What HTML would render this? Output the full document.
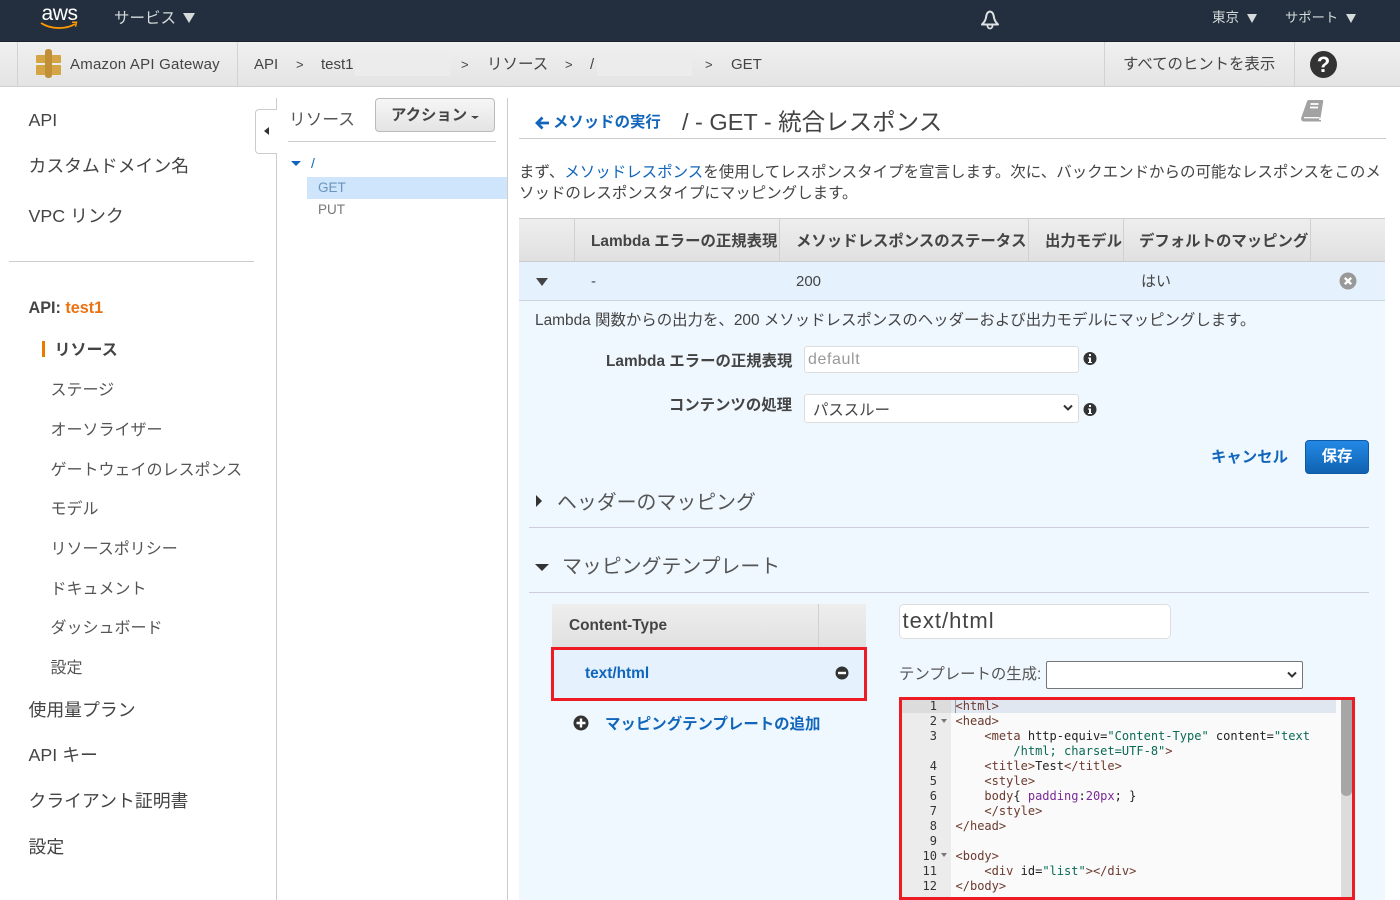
<!DOCTYPE html>
<html lang="ja"><head><meta charset="utf-8"><title>Amazon API Gateway</title>
<style>
html,body{margin:0;padding:0;background:#fff;}
body{width:1400px;height:900px;overflow:hidden;position:relative;font-family:"Liberation Sans","Noto Sans CJK JP",sans-serif;color:#444;font-size:14px;}
.t{position:absolute;white-space:nowrap;line-height:20px;}
.b{position:absolute;}
.nav{font-size:17.850px;color:#444;}
.sub{font-size:16px;color:#555;}
.th{font-size:15.400px;font-weight:bold;color:#444;top:232px;}
.hd{background:linear-gradient(#eee,#e0e0e0);}
.cd{position:absolute;left:955.500px;font-family:"DejaVu Sans Mono","Liberation Mono",monospace;font-size:12.030px;line-height:15px;white-space:pre;color:#222;}
.tg{color:#6b3a2e}.av{color:#0a6a55}
.ln{position:absolute;width:36px;left:901px;text-align:right;font-family:"DejaVu Sans Mono",monospace;font-size:12px;line-height:15px;color:#333;}
.fold{position:absolute;left:941px;width:0;height:0;border-left:3px solid transparent;border-right:3px solid transparent;border-top:4px solid #777;}
</style></head><body>

<!-- top bar -->
<div class="b" style="left:0;top:0;width:1400px;height:41px;background:#232f3e;border-bottom:1px solid #1a2430;"></div>
<div class="t" style="left:41.500px;top:2px;font-size:21px;color:#fff;line-height:24px;letter-spacing:-.4px;">aws</div>
<svg class="b" style="left:40px;top:21px" width="38" height="10" viewBox="0 0 38 10"><path d="M1 2C10 8 25 9 35 3" fill="none" stroke="#f90" stroke-width="1.800"/><path d="M32 1.200l4.500 0-1 4.500" fill="none" stroke="#f90" stroke-width="1.500"/></svg>
<div class="t" style="left:114px;top:9px;font-size:15.500px;color:#d5dbdb;">サービス</div>
<div class="b" style="left:183px;top:13px;border-left:6px solid transparent;border-right:6px solid transparent;border-top:10px solid #d5dbdb;"></div>
<svg class="b" style="left:979px;top:9px" width="22" height="22" viewBox="0 0 22 22"><path d="M11 2.500C8 3 7.500 5.500 7 8.500C6.600 11 5 13.500 3 15.500H19C17 13.500 15.400 11 15 8.500C14.500 5.500 14 3 11 2.500Z" fill="none" stroke="#dfe2e2" stroke-width="2" stroke-linejoin="round"/><path d="M8.500 16.500a2.500 3 0 0 0 5 0" fill="none" stroke="#dfe2e2" stroke-width="1.800"/></svg>
<div class="t" style="left:1212px;top:8px;font-size:13.500px;color:#d5dbdb;">東京</div>
<div class="b" style="left:1247px;top:14px;border-left:5px solid transparent;border-right:5px solid transparent;border-top:9px solid #d5dbdb;"></div>
<div class="t" style="left:1285px;top:8px;font-size:13.300px;color:#d5dbdb;">サポート</div>
<div class="b" style="left:1346px;top:14px;border-left:5px solid transparent;border-right:5px solid transparent;border-top:9px solid #d5dbdb;"></div>

<!-- service bar -->
<div class="b" style="left:0;top:42px;width:1400px;height:44px;background:linear-gradient(#f0f0f0,#e4e4e4);border-bottom:1px solid #d0d0d0;"></div>
<div class="b" style="left:17px;top:42px;width:1px;height:44px;background:#d2d2d2;"></div>
<div class="b" style="left:237px;top:42px;width:1px;height:44px;background:#d2d2d2;"></div>
<div class="b" style="left:1104px;top:42px;width:1px;height:44px;background:#d2d2d2;"></div>
<div class="b" style="left:1294px;top:42px;width:1px;height:44px;background:#d2d2d2;"></div>
<svg class="b" style="left:36px;top:49px" width="26" height="29" viewBox="0 0 26 29"><path d="M0 7q0-1 1-1h9v8H1q-1 0-1-1zM15 6h9q1 0 1 1v6q0 1-1 1h-9zM0 17q0-1 1-1h9v10H1q-1 0-1-1zM15 16h9q1 0 1 1v8q0 1-1 1h-9z" fill="#d4a545"/><path d="M9 3q0-3 3.500-3T16 3v23q0 3-3.500 3T9 26z" fill="#c08f37"/></svg>
<div class="t" style="left:70px;top:55px;font-size:15px;letter-spacing:.22px;color:#444;">Amazon API Gateway</div>
<div class="t" style="left:254px;top:55px;font-size:15px;">API</div>
<div class="t" style="left:296px;top:55px;font-size:13px;">&gt;</div>
<div class="t" style="left:321px;top:55px;font-size:15px;">test1</div>
<div class="b" style="left:355px;top:52px;width:95px;height:24px;background:#ececec;"></div>
<div class="t" style="left:461px;top:55px;font-size:13px;">&gt;</div>
<div class="t" style="left:487px;top:55px;font-size:15.500px;">リソース</div>
<div class="t" style="left:565px;top:55px;font-size:13px;">&gt;</div>
<div class="t" style="left:590px;top:55px;font-size:15px;">/</div>
<div class="b" style="left:597px;top:52px;width:95px;height:24px;background:#ececec;"></div>
<div class="t" style="left:705px;top:55px;font-size:13px;">&gt;</div>
<div class="t" style="left:731px;top:55px;font-size:15px;">GET</div>
<div class="t" style="left:1123px;top:55px;font-size:15.400px;">すべてのヒントを表示</div>
<div class="b" style="left:1310px;top:51px;width:27px;height:27px;border-radius:50%;background:#333;color:#fff;font:bold 22px/27px 'Liberation Sans',sans-serif;text-align:center;">?</div>

<!-- left nav -->
<div class="t nav" style="left:28.500px;top:110px;">API</div>
<div class="t nav" style="left:28.500px;top:156px;">カスタムドメイン名</div>
<div class="t nav" style="left:28.500px;top:206px;">VPC リンク</div>
<div class="b" style="left:9px;top:261px;width:245px;height:1px;background:#ccc;"></div>
<div class="t" style="left:28.500px;top:298px;font-size:16.200px;font-weight:bold;color:#444;">API: <span style="color:#ec7211">test1</span></div>
<div class="b" style="left:42px;top:341px;width:3px;height:16px;background:#e87b00;"></div>
<div class="t" style="left:54.500px;top:341px;font-size:16px;font-weight:bold;color:#444;">リソース</div>
<div class="t sub" style="left:50.500px;top:381px;">ステージ</div>
<div class="t sub" style="left:50.500px;top:421px;">オーソライザー</div>
<div class="t sub" style="left:50.500px;top:461px;">ゲートウェイのレスポンス</div>
<div class="t sub" style="left:50.500px;top:500px;">モデル</div>
<div class="t sub" style="left:50.500px;top:540px;">リソースポリシー</div>
<div class="t sub" style="left:50.500px;top:580px;">ドキュメント</div>
<div class="t sub" style="left:50.500px;top:619px;">ダッシュボード</div>
<div class="t sub" style="left:50.500px;top:659px;">設定</div>
<div class="t nav" style="left:28.500px;top:700px;">使用量プラン</div>
<div class="t nav" style="left:28.500px;top:745px;">API キー</div>
<div class="t nav" style="left:28.500px;top:791px;">クライアント証明書</div>
<div class="t nav" style="left:28.500px;top:837px;">設定</div>
<div class="b" style="left:276px;top:98px;width:1px;height:802px;background:#ccc;"></div>
<div class="b" style="left:255px;top:109px;width:21px;height:43px;background:#fff;border:1px solid #ccc;border-right:none;border-radius:4px 0 0 4px;"></div>
<div class="b" style="left:264px;top:127px;border-top:4px solid transparent;border-bottom:4px solid transparent;border-right:5px solid #333;"></div>

<!-- resource column -->
<div class="t" style="left:289px;top:110px;font-size:16.700px;color:#555;">リソース</div>
<div class="b" style="left:375px;top:98px;width:120px;height:34px;box-sizing:border-box;background:linear-gradient(#f6f6f6,#e4e4e4);border:1px solid #bbb;border-radius:4px;"></div>
<div class="t" style="left:391px;top:106px;font-size:15.400px;font-weight:bold;color:#444;">アクション</div>
<div class="b" style="left:471px;top:116px;border-left:4px solid transparent;border-right:4px solid transparent;border-top:3px solid #444;"></div>
<div class="b" style="left:288px;top:141px;width:208px;height:1px;background:#ccc;"></div>
<div class="b" style="left:291px;top:161px;border-left:5px solid transparent;border-right:5px solid transparent;border-top:5px solid #1166bb;"></div>
<div class="t" style="left:311px;top:153px;font-size:14px;color:#1166bb;">/</div>
<div class="b" style="left:307px;top:177px;width:200px;height:22px;background:#cfe5fb;"></div>
<div class="t" style="left:318px;top:178px;font-size:13.500px;color:#6a94bd;">GET</div>
<div class="t" style="left:318px;top:200px;font-size:13.500px;color:#777;">PUT</div>
<div class="b" style="left:507px;top:98px;width:1px;height:802px;background:#ccc;"></div>

<!-- main header -->
<svg class="b" style="left:535px;top:116px" width="15" height="14" viewBox="0 0 15 14"><path d="M7.500 1.500L2 7l5.500 5.500M2.500 7H14" fill="none" stroke="#1166bb" stroke-width="2.800"/></svg>
<div class="t" style="left:553px;top:113px;font-size:15.400px;font-weight:bold;color:#1166bb;">メソッドの実行</div>
<div class="t" style="left:682px;top:109px;font-size:23.500px;line-height:26px;color:#444;">/ - GET - 統合レスポンス</div>
<svg class="b" style="left:1300px;top:99px" width="24" height="24" viewBox="0 0 24 24"><path d="M7 2.500Q7.300 1 9 1H22Q23.500 1 23.200 2.500L20.500 19H19.500L19 21H21V22.500H4Q.8 22.500 1.100 19Z" fill="#a2a2a2"/><path d="M4 18.700H19.500" stroke="#fff" stroke-width="1.300"/><path d="M10.500 5H18.500M10 8.500H18" stroke="#fff" stroke-width="1.700"/></svg>
<div class="b" style="left:519px;top:138px;width:867px;height:1px;background:#ccc;"></div>
<div class="t" style="left:519px;top:162px;font-size:15.470px;line-height:21px;color:#444;width:866px;white-space:normal;">まず、<span style="color:#1166bb">メソッドレスポンス</span>を使用してレスポンスタイプを宣言します。次に、バックエンドからの可能なレスポンスをこのメソッドのレスポンスタイプにマッピングします。</div>

<!-- table -->
<div class="b hd" style="left:519px;top:218px;width:866px;height:44px;border-top:1px solid #ccc;border-bottom:1px solid #ccc;box-sizing:border-box;"></div>
<div class="b" style="left:574px;top:219px;width:1px;height:42px;background:#d0d0d0;"></div>
<div class="b" style="left:779px;top:219px;width:1px;height:42px;background:#d0d0d0;"></div>
<div class="b" style="left:1028px;top:219px;width:1px;height:42px;background:#d0d0d0;"></div>
<div class="b" style="left:1123px;top:219px;width:1px;height:42px;background:#d0d0d0;"></div>
<div class="b" style="left:1310px;top:219px;width:1px;height:42px;background:#d0d0d0;"></div>
<div class="t th" style="left:591px;">Lambda エラーの正規表現</div>
<div class="t th" style="left:796px;">メソッドレスポンスのステータス</div>
<div class="t th" style="left:1045px;">出力モデル</div>
<div class="t th" style="left:1139px;">デフォルトのマッピング</div>

<div class="b" style="left:519px;top:262px;width:866px;height:39px;background:#e5f2fe;border-bottom:1px solid #cdd5dc;box-sizing:border-box;"></div>
<div class="b" style="left:536px;top:278px;border-left:6px solid transparent;border-right:6px solid transparent;border-top:8px solid #444;"></div>
<div class="t" style="left:591px;top:272px;font-size:15px;">-</div>
<div class="t" style="left:796px;top:272px;font-size:15px;">200</div>
<div class="t" style="left:1141px;top:272px;font-size:15px;">はい</div>
<svg class="b" style="left:1339px;top:272px" width="18" height="18" viewBox="0 0 18 18"><circle cx="9" cy="9" r="8.500" fill="#999"/><path d="M5.800 5.800l6.400 6.400M12.200 5.800l-6.400 6.400" stroke="#fff" stroke-width="2.400"/></svg>

<!-- panel -->
<div class="b" style="left:519px;top:301px;width:866px;height:599px;background:#f0f8ff;"></div>
<div class="t" style="left:535px;top:311px;font-size:15.430px;">Lambda 関数からの出力を、200 メソッドレスポンスのヘッダーおよび出力モデルにマッピングします。</div>
<div class="t" style="left:606px;top:352px;font-size:15.400px;font-weight:bold;width:186px;text-align:right;">Lambda エラーの正規表現</div>
<div class="b" style="left:804px;top:346px;width:275px;height:27px;box-sizing:border-box;background:#fff;border:1px solid #ddd;border-radius:3px;"></div>
<div class="t" style="left:808px;top:350px;font-size:16px;letter-spacing:.6px;color:#999;">default</div>
<svg class="b" style="left:1083px;top:351px" width="14" height="15" viewBox="0 0 14 15"><circle cx="7" cy="7.500" r="6.500" fill="#333"/><path d="M6 3h2v2H6zM5 6.500h3V11h1v1H5v-1h1V7.500H5z" fill="#fff"/></svg>
<div class="t" style="left:606px;top:396px;font-size:15.400px;font-weight:bold;width:186px;text-align:right;">コンテンツの処理</div>
<div class="b" style="left:804px;top:394px;width:275px;height:29px;box-sizing:border-box;background:#fff;border:1px solid #ddd;border-radius:3px;"></div>
<div class="t" style="left:813px;top:401px;font-size:15.400px;">パススルー</div>
<svg class="b" style="left:1062px;top:404px" width="12" height="8" viewBox="0 0 12 8"><path d="M2 1.500l4 4 4-4" fill="none" stroke="#333" stroke-width="2"/></svg>
<svg class="b" style="left:1083px;top:402px" width="14" height="15" viewBox="0 0 14 15"><circle cx="7" cy="7.500" r="6.500" fill="#333"/><path d="M6 3h2v2H6zM5 6.500h3V11h1v1H5v-1h1V7.500H5z" fill="#fff"/></svg>
<div class="t" style="left:1211px;top:448px;font-size:15.400px;font-weight:bold;color:#1166bb;">キャンセル</div>
<div class="b" style="left:1305px;top:440px;width:64px;height:34px;box-sizing:border-box;background:linear-gradient(#2389e6,#0f62b0);border:1px solid #0e5aa5;border-radius:4px;color:#fff;font-size:15.400px;font-weight:bold;line-height:31px;text-align:center;">保存</div>
<div class="b" style="left:536px;top:495px;border-top:6px solid transparent;border-bottom:6px solid transparent;border-left:6px solid #333;"></div>
<div class="t" style="left:557px;top:491px;font-size:19.900px;line-height:24px;color:#555;">ヘッダーのマッピング</div>
<div class="b" style="left:529px;top:527px;width:840px;height:1px;background:#ccd;"></div>
<div class="b" style="left:535px;top:564px;border-left:7px solid transparent;border-right:7px solid transparent;border-top:7px solid #333;"></div>
<div class="t" style="left:562px;top:555px;font-size:19.900px;line-height:24px;color:#555;">マッピングテンプレート</div>
<div class="b" style="left:529px;top:592px;width:840px;height:1px;background:#ccd;"></div>

<!-- content type -->
<div class="b hd" style="left:552px;top:604px;width:314px;height:44px;"></div>
<div class="b" style="left:818px;top:604px;width:1px;height:44px;background:#d0d0d0;"></div>
<div class="t" style="left:569px;top:616px;font-size:15.400px;font-weight:bold;">Content-Type</div>
<div class="b" style="left:551px;top:647px;width:316px;height:54px;box-sizing:border-box;background:#e5f2fe;border:3px solid #ed1c24;"></div>
<div class="t" style="left:585px;top:664px;font-size:15.400px;font-weight:bold;color:#1166bb;">text/html</div>
<svg class="b" style="left:835px;top:666px" width="14" height="14" viewBox="0 0 14 14"><circle cx="7" cy="7" r="6.500" fill="#333"/><rect x="3" y="5.800" width="8" height="2.400" fill="#fff"/></svg>
<svg class="b" style="left:573px;top:715px" width="16" height="16" viewBox="0 0 16 16"><circle cx="8" cy="8" r="7.500" fill="#333"/><path d="M3.500 8h9M8 3.500v9" stroke="#fff" stroke-width="2.400"/></svg>
<div class="t" style="left:605px;top:715px;font-size:15.430px;font-weight:bold;color:#1166bb;">マッピングテンプレートの追加</div>

<div class="b" style="left:899px;top:604px;width:272px;height:35px;box-sizing:border-box;background:#fff;border:1px solid #ddd;border-radius:5px;"></div>
<div class="t" style="left:902.500px;top:610px;font-size:22px;line-height:22px;letter-spacing:1px;color:#444;">text/html</div>
<div class="t" style="left:899px;top:665px;font-size:15.400px;color:#555;">テンプレートの生成:</div>
<div class="b" style="left:1046px;top:661px;width:257px;height:28px;box-sizing:border-box;background:#fff;border:1px solid #767676;border-radius:2px;"></div>
<svg class="b" style="left:1286px;top:671px" width="12" height="8" viewBox="0 0 12 8"><path d="M2 1.500l4 4 4-4" fill="none" stroke="#333" stroke-width="2"/></svg>

<!-- editor -->
<div class="b" style="left:899px;top:697px;width:456px;height:203px;box-sizing:border-box;background:#fafafa;border:3px solid #ed1c24;"></div>
<div class="b" style="left:902px;top:700px;width:49px;height:197px;background:#ececec;"></div>
<div class="b" style="left:902px;top:700px;width:49px;height:13px;background:#dcdcdc;"></div>
<div class="b" style="left:951px;top:700px;width:385px;height:13px;background:#e0e7f0;"></div>
<div class="b" style="left:955px;top:700px;width:1px;height:13px;background:#999;"></div>
<div class="b" style="left:1341px;top:700px;width:11px;height:197px;background:#dcdcdc;"></div>
<div class="b" style="left:1341px;top:700px;width:11px;height:96px;background:#a6a6a6;border-radius:0 0 5px 5px;"></div>

<div class="ln" style="top:699px">1</div><div class="ln" style="top:714px">2</div><div class="ln" style="top:729px">3</div><div class="ln" style="top:759px">4</div><div class="ln" style="top:774px">5</div><div class="ln" style="top:789px">6</div><div class="ln" style="top:804px">7</div><div class="ln" style="top:819px">8</div><div class="ln" style="top:834px">9</div><div class="ln" style="top:849px">10</div><div class="ln" style="top:864px">11</div><div class="ln" style="top:879px">12</div>
<div class="fold" style="top:719px"></div><div class="fold" style="top:853px"></div>

<div class="cd tg" style="top:699px">&lt;html&gt;</div>
<div class="cd tg" style="top:714px">&lt;head&gt;</div>
<div class="cd" style="top:729px"><span class="tg">    &lt;meta</span> http-equiv=<span class="av">"Content-Type"</span> content=<span class="av">"text</span></div>
<div class="cd av" style="top:744px">        /html; charset=UTF-8"<span class="tg">&gt;</span></div>
<div class="cd" style="top:759px"><span class="tg">    &lt;title&gt;</span>Test<span class="tg">&lt;/title&gt;</span></div>
<div class="cd tg" style="top:774px">    &lt;style&gt;</div>
<div class="cd" style="top:789px"><span class="tg">    body</span>{ <span style="color:#7a2a96">padding</span>:<span style="color:#7a2a96">20px</span>; }</div>
<div class="cd tg" style="top:804px">    &lt;/style&gt;</div>
<div class="cd tg" style="top:819px">&lt;/head&gt;</div>
<div class="cd tg" style="top:849px">&lt;body&gt;</div>
<div class="cd" style="top:864px"><span class="tg">    &lt;div</span> id=<span class="av">"list"</span><span class="tg">&gt;&lt;/div&gt;</span></div>
<div class="cd tg" style="top:879px">&lt;/body&gt;</div>
</body></html>
